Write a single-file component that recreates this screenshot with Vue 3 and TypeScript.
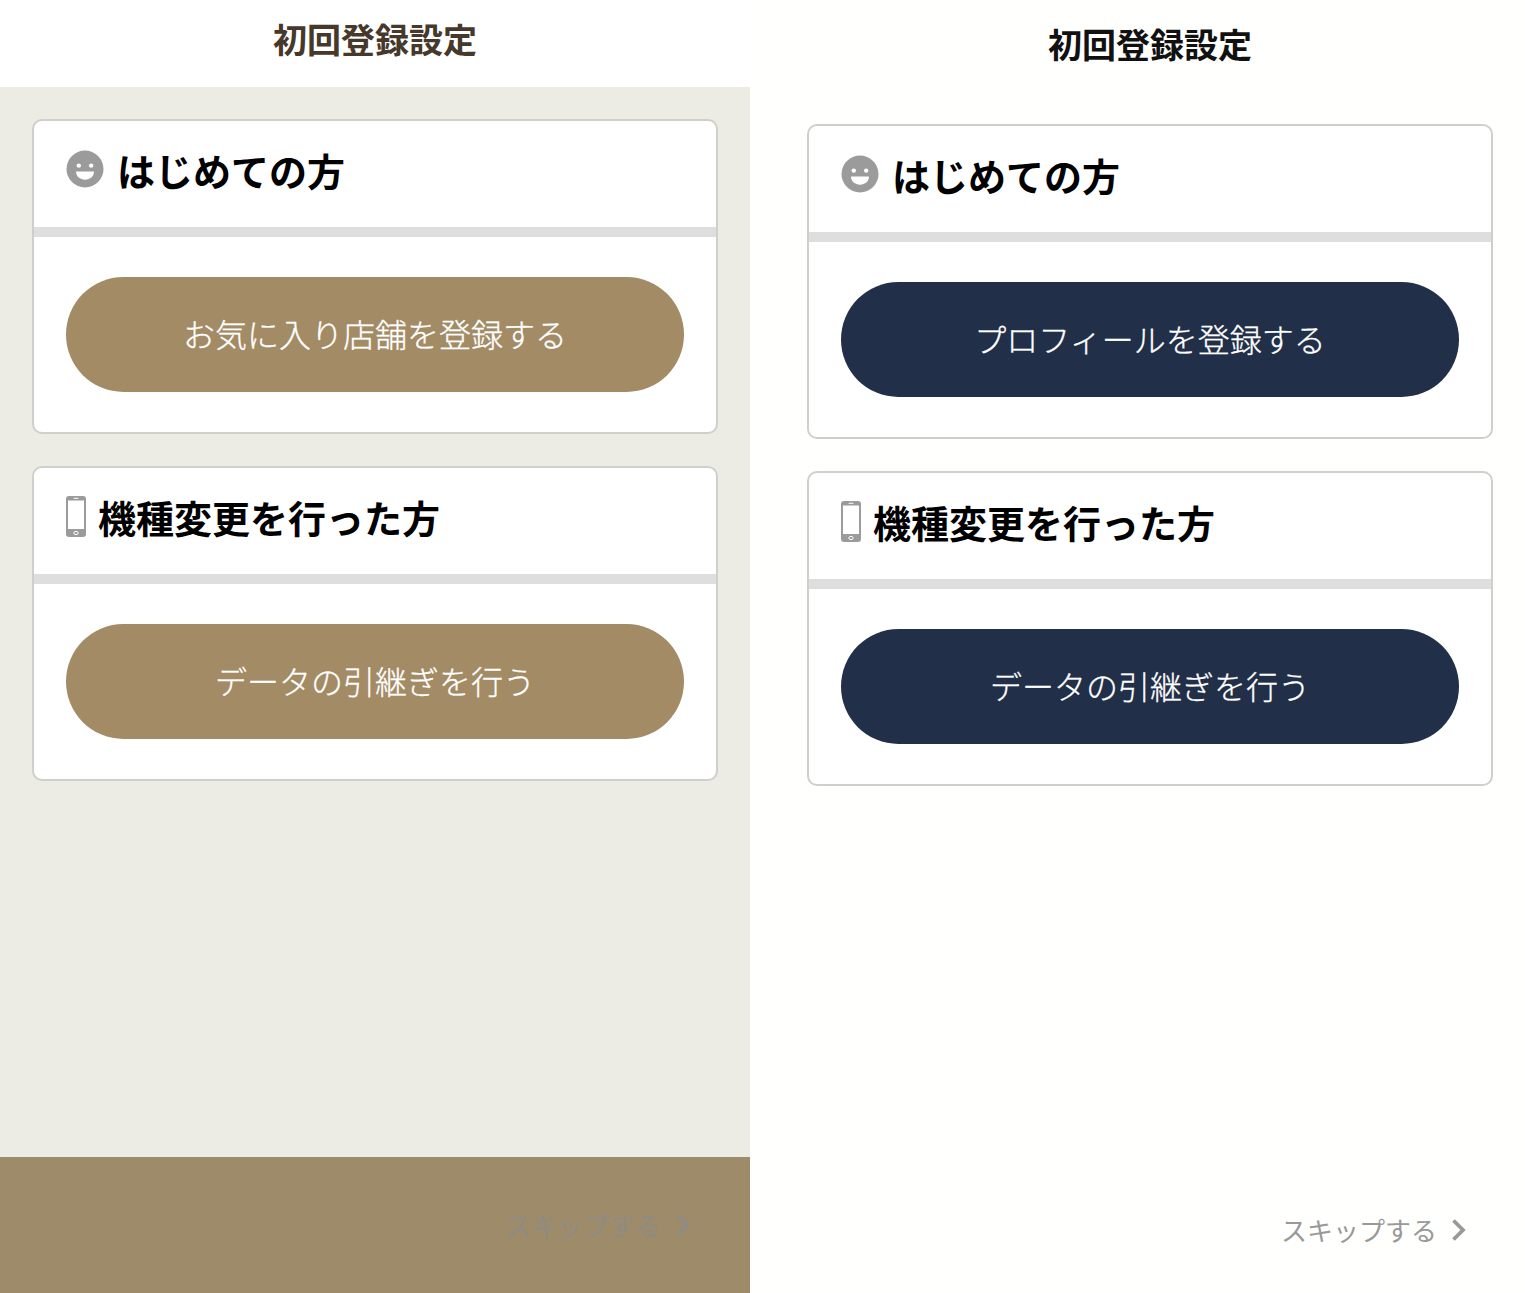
<script setup lang="ts">
interface Panel {
  key: string
  first: string
}
const panels: Panel[] = [
  { key: 'left', first: 'お気に入り店舗を登録する' },
  { key: 'right', first: 'プロフィールを登録する' },
]
</script>

<template>
  <div class="page">
    <section v-for="p in panels" :key="p.key" class="panel" :class="p.key">
      <header class="head"><h1>初回登録設定</h1></header>
      <div class="body">
        <div class="card">
          <div class="card-head">
            <svg class="smile" viewBox="0 0 38 38" width="38" height="38">
              <circle cx="19" cy="19" r="18.5" fill="#9b9b9b" />
              <circle cx="12.8" cy="15.6" r="2.2" fill="#fff" />
              <circle cx="25.2" cy="15.6" r="2.2" fill="#fff" />
              <path d="M10 21.500h18c0 4.800-4 8.200-9 8.200s-9-3.400-9-8.200z" fill="#fff" />
            </svg>
            <h2>はじめての方</h2>
          </div>
          <div class="card-body"><button class="cta">{{ p.first }}</button></div>
        </div>
        <div class="card">
          <div class="card-head">
            <svg class="phone" viewBox="0 0 20 41" width="20" height="41">
              <rect width="20" height="41" rx="3" fill="#9b9b9b" />
              <rect x="2" y="4.500" width="16" height="28.500" fill="#fff" />
              <rect x="7.500" y="1.800" width="5" height="1" rx=".5" fill="#fff" />
              <ellipse cx="10" cy="37" rx="2.200" ry="1.600" fill="none" stroke="#fff" stroke-width="1" />
            </svg>
            <h2>機種変更を行った方</h2>
          </div>
          <div class="card-body"><button class="cta">データの引継ぎを行う</button></div>
        </div>
      </div>
      <footer class="foot">
        <span class="skip">スキップする</span>
        <svg class="chev" viewBox="0 0 16 24" width="16" height="24">
          <path d="M2.500 2.500 12 12 2.500 21.500" fill="none" stroke="currentColor" stroke-width="3.800" />
        </svg>
      </footer>
    </section>
  </div>
</template>

<style>
body { margin: 0; background: #fff; }
</style>

<style scoped>
.page {
  display: flex;
  width: 1525px;
  height: 1293px;
  overflow: hidden;
  font-family: "Noto Sans CJK JP", "Noto Sans", sans-serif;
}
.panel {
  display: flex;
  flex-direction: column;
  height: 1293px;
  box-sizing: border-box;
}
.left { width: 750px; background: #ecebe4; }
.right { width: 775px; background: #fffffe; }

.head {
  display: flex;
  align-items: center;
  justify-content: center;
  height: 87px;
  padding-bottom: 10px;
  box-sizing: border-box;
  background: #fff;
}
.right .head { height: 92px; padding-left: 25px; padding-bottom: 4px; background: transparent; }
h1 {
  margin: 0;
  font-size: 34px;
  line-height: 48px;
  font-weight: 700;
  color: #46382a;
}
.right h1 { color: #111; }

.body {
  flex: 1;
  display: flex;
  flex-direction: column;
  gap: 32px;
  padding: 32px 32px 0;
}
.right .body { padding-left: 57px; }

.card {
  height: 315px;
  box-sizing: border-box;
  background: #fff;
  border: 2px solid #cfcfcb;
  border-radius: 10px;
  overflow: hidden;
}
.card-head {
  display: flex;
  align-items: center;
  height: 106px;
  padding-left: 32px;
  padding-bottom: 8px;
  box-sizing: border-box;
}
.smile { margin-right: 13px; margin-top: -2px; }
.phone { margin-right: 12px; margin-top: -2px; }
h2 {
  margin: 0;
  font-size: 38px;
  line-height: 54px;
  font-weight: 700;
  color: #000;
}
.card-body {
  border-top: 10px solid #dedede;
  padding: 40px 32px;
}
.cta {
  display: block;
  width: 100%;
  height: 115px;
  padding: 0 0 4px;
  border: 0;
  border-radius: 58px;
  background: #a28b65;
  color: #fff;
  font: 300 32px/46px "Noto Sans CJK JP", "Noto Sans", sans-serif;
  -webkit-text-stroke: 0.3px #fff;
}
.right .cta { background: #212f48; }

.foot {
  display: flex;
  align-items: center;
  justify-content: flex-end;
  gap: 14px;
  height: 136px;
  padding: 0 59px 0 0;
  box-sizing: border-box;
  background: #9d8b6a;
  color: #8e8c84;
}
.right .foot { background: transparent; color: #999; padding: 10px 58px 0 0; }
.skip { font-size: 26px; font-weight: 400; line-height: 38px; }
</style>
